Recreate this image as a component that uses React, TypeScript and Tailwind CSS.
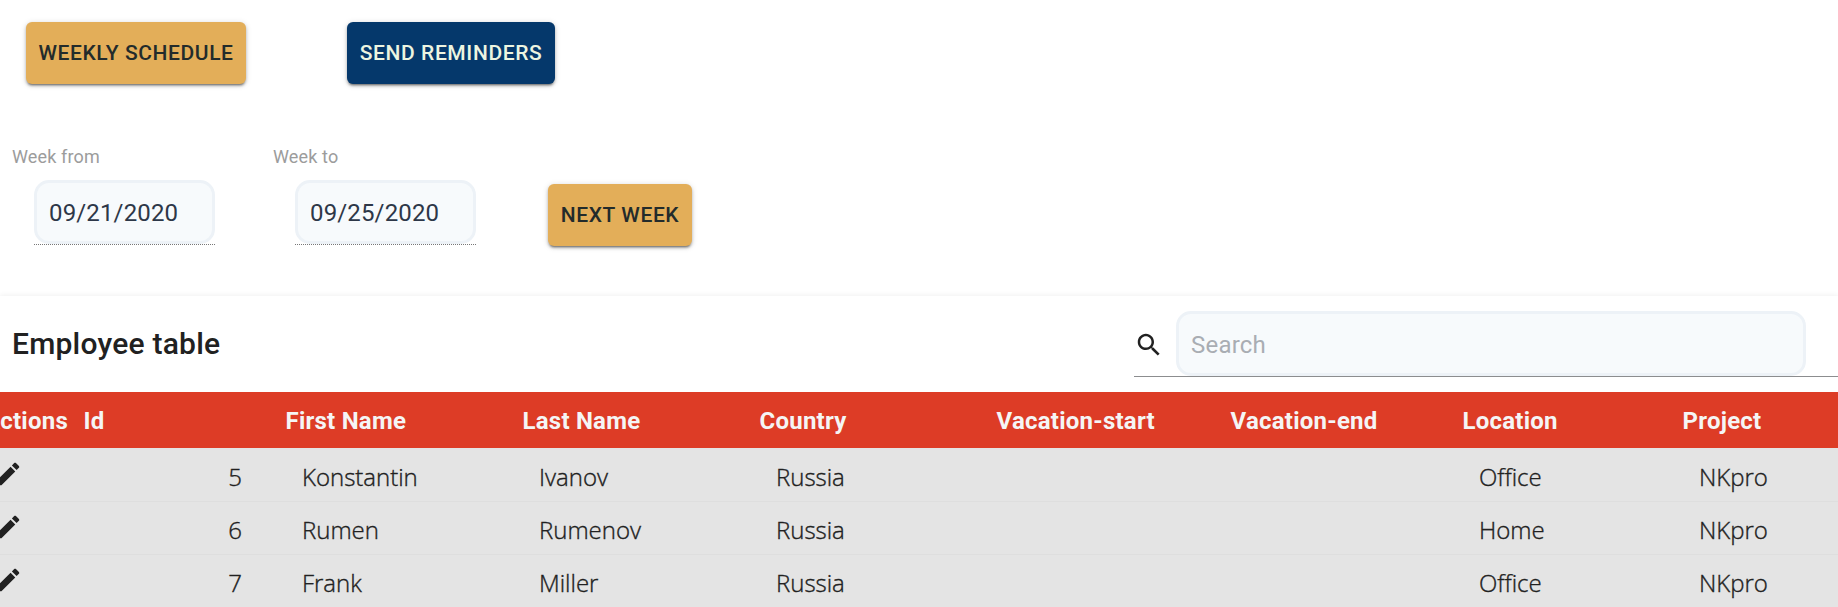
import type { ReactNode } from "react";

type Employee = {
  id: number;
  firstName: string;
  lastName: string;
  country: string;
  vacationStart: string;
  vacationEnd: string;
  location: string;
  project: string;
};

const employees: Employee[] = [
  { id: 5, firstName: "Konstantin", lastName: "Ivanov", country: "Russia", vacationStart: "", vacationEnd: "", location: "Office", project: "NKpro" },
  { id: 6, firstName: "Rumen", lastName: "Rumenov", country: "Russia", vacationStart: "", vacationEnd: "", location: "Home", project: "NKpro" },
  { id: 7, firstName: "Frank", lastName: "Miller", country: "Russia", vacationStart: "", vacationEnd: "", location: "Office", project: "NKpro" },
];

const headers = ["Id", "First Name", "Last Name", "Country", "Vacation-start", "Vacation-end", "Location", "Project"];

const columns = "grid grid-cols-[74px_202px_237px_237px_237px_234px_232px_220px_1fr]";

function Button({ tone, children }: { tone: "gold" | "navy"; children: ReactNode }) {
  const color = tone === "gold" ? "bg-[#e3ae59] text-[#232b2b]" : "bg-[#05386b] text-[#edf5e1]";
  return (
    <button
      className={`${color} flex h-[62px] w-full items-center justify-center rounded-[6px] pt-px text-[21px] font-medium tracking-[0.6px] whitespace-nowrap uppercase shadow-[0_3px_2px_-2px_rgba(0,0,0,0.35),0_2px_3px_rgba(0,0,0,0.25),0_1px_6px_rgba(0,0,0,0.14)]`}
    >
      {children}
    </button>
  );
}

function DateField({ label, value }: { label: string; value: string }) {
  return (
    <div className="w-[261px]">
      <label className="block h-[34px] pl-3 text-[18px] leading-[21px] tracking-[0.15px] text-[#9c9c9c]">{label}</label>
      <div className="ml-[34px] w-[181px] border-b border-dotted border-[#777]">
        <div className="flex h-[64px] items-center rounded-[15px] border-[3px] border-[#edf2f7] bg-[#f7fafc] pt-[2px] pl-3 text-[24px] tracking-[0.15px] text-[#2d3748]">
          {value}
        </div>
      </div>
    </div>
  );
}

function SearchIcon() {
  return (
    <svg viewBox="0 0 24 24" className="mt-[2px] size-[30px] fill-[#212121]">
      <path d="M15.5 14h-.79l-.28-.27C15.41 12.59 16 11.11 16 9.5 16 5.91 13.09 3 9.5 3S3 5.91 3 9.5 5.91 16 9.5 16c1.61 0 3.09-.59 4.23-1.57l.27.28v.79l5 4.99L20.49 19l-4.99-5zm-6 0C7.01 14 5 11.99 5 9.5S7.01 5 9.5 5 14 7.01 14 9.5 11.99 14 9.5 14z" />
    </svg>
  );
}

function EditIcon() {
  return (
    <svg viewBox="0 0 24 24" className="size-[30px] shrink-0 fill-[#212121]">
      <path d="M3 17.25V21h3.75L17.81 9.94l-3.75-3.75L3 17.25zM20.71 7.04c.39-.39.39-1.02 0-1.41l-2.34-2.34c-.39-.39-1.02-.39-1.41 0l-1.83 1.83 3.75 3.75 1.83-1.83z" />
    </svg>
  );
}

export default function App() {
  return (
    <div className="h-[607px] w-full overflow-hidden bg-white font-['Roboto',sans-serif] text-[#212121]">
      <div className="flex gap-[101px] pt-[22px] pl-[26px]">
        <div className="w-[220px]"><Button tone="gold">Weekly schedule</Button></div>
        <div className="w-[208px]"><Button tone="navy">Send reminders</Button></div>
      </div>

      <div className="mt-[62px] flex h-[148px]">
        <DateField label="Week from" value="09/21/2020" />
        <DateField label="Week to" value="09/25/2020" />
        <div className="mt-[38px] ml-[26px] w-[144px]"><Button tone="gold">Next week</Button></div>
      </div>

      <main className="mt-[2px] shadow-[0_-1px_5px_rgba(0,0,0,0.06)]">
        <div className="flex h-[96px] justify-between">
          <h1 className="pt-[30px] pl-3 text-[30px] leading-[36px] font-medium tracking-[0.22px]">Employee table</h1>
          <div className="mt-[15px] flex h-[66px] w-[704px] items-center border-b border-[#8c8d8f]">
            <SearchIcon />
            <div className="ml-3 flex h-[65px] w-[630px] items-center rounded-[15px] border-[3px] border-[#edf2f7] bg-[#f7fafc] pt-[2px] pl-3 text-[24px] tracking-[0.22px] text-[#a9adb3]">
              Search
            </div>
          </div>
        </div>

        <div className={`${columns} h-[56px] items-center bg-[#dd3c26] pt-[2px] text-[24px] font-bold tracking-[0.24px] text-[#f5f5f5]`}>
          <div className="flex justify-end overflow-hidden pr-[6px]">Actions</div>
          {headers.map((h) => (
            <div key={h} className="pl-[9.5px] whitespace-nowrap">{h}</div>
          ))}
        </div>

        <div className="bg-[#e4e4e4] pt-px">
          {employees.map((e) => (
            <div
              key={e.id}
              className={`${columns} h-[53px] items-center border-b border-[#dedede] font-['Open_Sans',sans-serif] text-[24px] leading-[34px] font-light tracking-[-0.02px] [-webkit-text-stroke:0.35px_#212121]`}
            >
              <div className="-ml-[7px] flex pb-[3px]"><EditIcon /></div>
              <div className="pt-[4px] pr-[34px] text-right">{e.id}</div>
              <div className="pt-[4px] pl-[26px]">{e.firstName}</div>
              <div className="pt-[4px] pl-[26px]">{e.lastName}</div>
              <div className="pt-[4px] pl-[26px]">{e.country}</div>
              <div>{e.vacationStart}</div>
              <div>{e.vacationEnd}</div>
              <div className="pt-[4px] pl-[26px]">{e.location}</div>
              <div className="pt-[4px] pl-[26px]">{e.project}</div>
            </div>
          ))}
        </div>
      </main>
    </div>
  );
}
